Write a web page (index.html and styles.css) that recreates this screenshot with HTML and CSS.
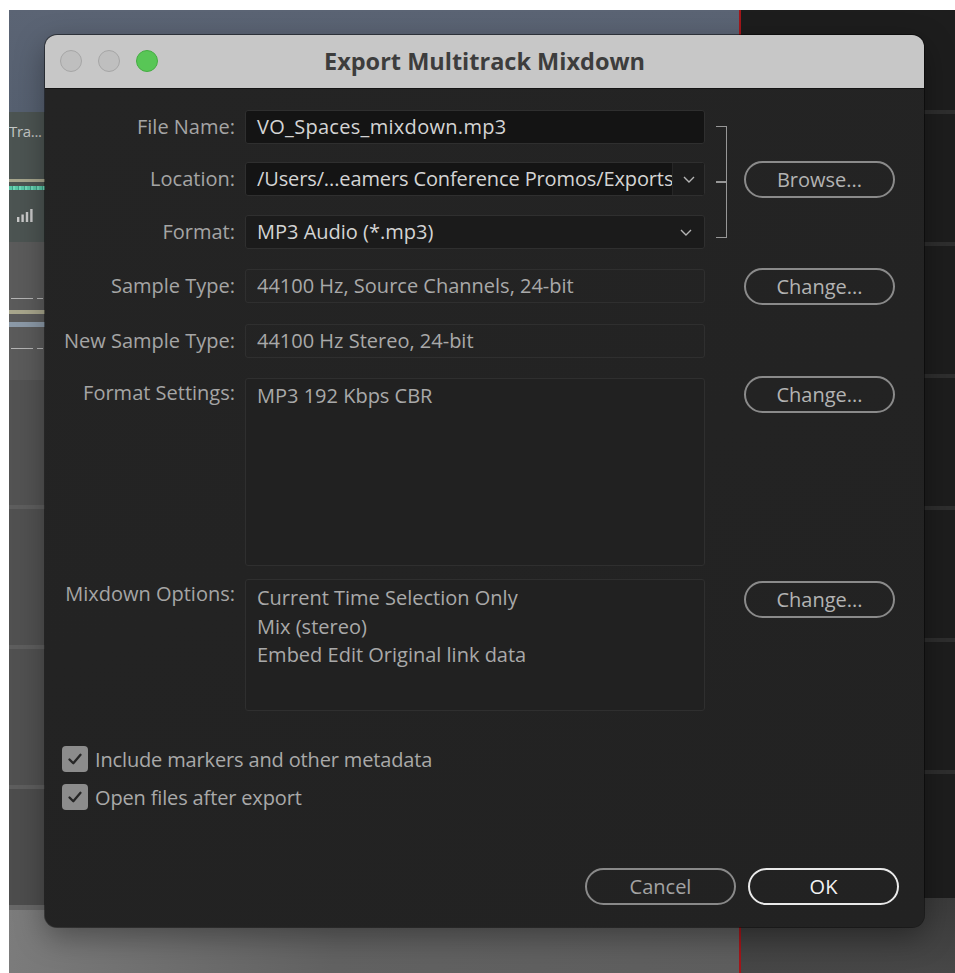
FILE: index.html
```html
<!DOCTYPE html>
<html lang="en">
<head>
<meta charset="utf-8">
<title>Export Multitrack Mixdown</title>
<link rel="stylesheet" href="styles.css">
</head>
<body>
<div class="desk">
  <div class="app">
    <div class="tracks">
      <div class="lane lane-head"></div>
      <div class="lane lane-audio">
        <span class="lane-name">Tra...</span>
        <span class="lane-vol"></span>
        <span class="lane-wave"></span>
        <svg class="lane-meter" width="16" height="13" viewBox="0 0 16 13">
          <rect x="0" y="8" width="2.4" height="5" fill="#c9c9c9"/>
          <rect x="4.4" y="5.5" width="2.4" height="7.5" fill="#c9c9c9"/>
          <rect x="8.8" y="3" width="2.4" height="10" fill="#c9c9c9"/>
          <rect x="13.2" y="0" width="2.4" height="13" fill="#c9c9c9"/>
        </svg>
      </div>
      <div class="lane lane-bus">
        <span class="bus-line"></span>
        <span class="bus-gold"></span>
        <span class="bus-blue"></span>
        <span class="bus-line bus-line-low"></span>
      </div>
      <div class="lane lane-a"></div>
      <div class="lane lane-b"></div>
      <div class="lane lane-b"></div>
      <div class="lane lane-c"></div>
      <div class="lane lane-edge"></div>
      <div class="lane lane-floor"></div>
    </div>
    <div class="playhead"></div>
    <div class="panels">
      <div class="panel panel-first"></div>
      <div class="panel"></div>
      <div class="panel"></div>
      <div class="panel"></div>
      <div class="panel"></div>
      <div class="panel"></div>
      <div class="panel panel-last"></div>
      <div class="panel-floor"></div>
    </div>
  </div>

  <div class="dialog">
    <div class="titlebar">
      <div class="lights">
        <span class="light"></span>
        <span class="light"></span>
        <span class="light light-green"></span>
      </div>
      <div class="title">Export Multitrack Mixdown</div>
    </div>

    <div class="dialog-body">
      <div class="form">
        <label class="lbl r1">File Name:</label>
        <div class="field field-input r1">VO_Spaces_mixdown.mp3</div>

        <label class="lbl r2">Location:</label>
        <div class="field field-combo r2">
          <span class="combo-text">/Users/...eamers Conference Promos/Exports</span>
          <span class="combo-arrow">
            <svg width="12" height="7" viewBox="0 0 12 7"><path d="M1 1l5 5 5-5" fill="none" stroke="#b5b5b5" stroke-width="1.4"/></svg>
          </span>
        </div>
        <button class="pill r2 pill-up">Browse...</button>

        <label class="lbl r3">Format:</label>
        <div class="field field-select r3">
          <span class="select-text">MP3 Audio (*.mp3)</span>
          <svg class="select-arrow" width="12" height="7" viewBox="0 0 12 7"><path d="M1 1l5 5 5-5" fill="none" stroke="#b5b5b5" stroke-width="1.4"/></svg>
        </div>

        <div class="bracket"><span class="bracket-mid"></span></div>

        <label class="lbl r4">Sample Type:</label>
        <div class="field field-static r4">44100 Hz, Source Channels, 24-bit</div>
        <button class="pill r4 pill-up">Change...</button>

        <label class="lbl r5">New Sample Type:</label>
        <div class="field field-static r5">44100 Hz Stereo, 24-bit</div>

        <label class="lbl lbl-area r6">Format Settings:</label>
        <div class="field field-area area-tall r6">MP3 192 Kbps CBR</div>
        <button class="pill r6 pill-up2">Change...</button>

        <label class="lbl lbl-area r7">Mixdown Options:</label>
        <div class="field field-area area-mix r7">
          <div>Current Time Selection Only</div>
          <div>Mix (stereo)</div>
          <div>Embed Edit Original link data</div>
        </div>
        <button class="pill r7 pill-down">Change...</button>
      </div>

      <div class="checks">
        <div class="check">
          <span class="box"><svg width="16" height="14" viewBox="0 0 16 14"><path d="M2.5 7.5l3.8 3.8L13.5 2.8" fill="none" stroke="#262626" stroke-width="2.3" stroke-linecap="round" stroke-linejoin="round"/></svg></span>
          <span class="check-text">Include markers and other metadata</span>
        </div>
        <div class="check">
          <span class="box"><svg width="16" height="14" viewBox="0 0 16 14"><path d="M2.5 7.5l3.8 3.8L13.5 2.8" fill="none" stroke="#262626" stroke-width="2.3" stroke-linecap="round" stroke-linejoin="round"/></svg></span>
          <span class="check-text">Open files after export</span>
        </div>
      </div>

      <div class="actions">
        <button class="pill pill-cancel">Cancel</button>
        <button class="pill pill-ok">OK</button>
      </div>
    </div>
  </div>
</div>
</body>
</html>
```

FILE: styles.css
```css
* { box-sizing: border-box; }

html, body {
  margin: 0;
  padding: 0;
  background: #ffffff;
}

body {
  font-family: "Open Sans", "Noto Sans", sans-serif;
  width: 955px;
  height: 973px;
  overflow: hidden;
}

.desk {
  position: relative;
  width: 955px;
  height: 973px;
  padding: 10px 0 0 9px;
}

/* ---------- host application behind the dialog ---------- */
.app {
  display: flex;
  height: 963px;
}

.tracks {
  width: 730px;
  display: flex;
  flex-direction: column;
}

.lane { position: relative; flex: none; }

.lane-head {
  height: 102px;
  background: linear-gradient(180deg, #5b6474 0%, #566070 100%);
}

.lane-audio {
  height: 130px;
  background: #4c5452;
}

.lane-name {
  position: absolute;
  left: 0;
  top: 9px;
  font-size: 15px;
  color: #c4c7c6;
  letter-spacing: -0.3px;
}

.lane-vol {
  position: absolute;
  left: 0; right: 0;
  top: 67px;
  height: 3px;
  background: #a7a68d;
}

.lane-wave {
  position: absolute;
  left: 0; right: 0;
  top: 74px;
  height: 4px;
  background: repeating-linear-gradient(90deg, #58c7a6 0 3px, #3f9d86 3px 4px, #6fd8b8 4px 6px);
}

.lane-meter {
  position: absolute;
  left: 8px;
  top: 97px;
}

.lane-bus {
  height: 138px;
  background: #5b5b5b;
}

.bus-line {
  position: absolute;
  left: 2px; right: 0;
  top: 56px;
  height: 1px;
  background: linear-gradient(90deg, #b5b5b5 0 22px, transparent 22px 26px, #b5b5b5 26px 32px, transparent 32px);
}
.bus-line-low { top: 106px; }

.bus-gold {
  position: absolute;
  left: 0; right: 0;
  top: 68px;
  height: 4px;
  background: #a9a78d;
}

.bus-blue {
  position: absolute;
  left: 0; right: 0;
  top: 80px;
  height: 5px;
  background: #8c9aa8;
}

.lane-a { height: 125px; background: #535353; }
.lane-b { height: 140px; background: #515151; border-top: 4px solid #5e5e5e; }
.lane-c { height: 120px; background: #4d4d4d; border-top: 4px solid #5e5e5e; }
.lane-edge { height: 5px; background: #686868; }
.lane-floor {
  flex: 1;
  background: linear-gradient(100deg, #7c7c7c 0%, #626262 45%, #5e5e5e 100%);
}

.playhead {
  width: 2px;
  flex: none;
  background: #a3161a;
}

.panels {
  flex: 1;
  display: flex;
  flex-direction: column;
}

.panel {
  flex: none;
  height: 132px;
  background: #1d1d1d;
  border-top: 4px solid #2e2e2e;
}
.panel-first { height: 100px; border-top: 0; }
.panel-last { height: 128px; }

.panel-floor {
  flex: 1;
  background: linear-gradient(180deg, #3a3a3a 0%, #474747 100%);
}

/* ---------- dialog window ---------- */
.dialog {
  position: absolute;
  left: 45px;
  top: 35px;
  width: 879px;
  height: 892px;
  border-radius: 12px;
  background: #232323;
  box-shadow: 0 0 0 1px rgba(0, 0, 0, 0.45), 0 10px 30px rgba(0, 0, 0, 0.35);
  display: flex;
  flex-direction: column;
  overflow: hidden;
}

.titlebar {
  position: relative;
  flex: none;
  height: 54px;
  background: #c7c7c7;
  border-bottom: 1px solid #141414;
  display: flex;
  align-items: center;
  justify-content: center;
}

.lights {
  position: absolute;
  left: 15px;
  top: 15px;
  display: flex;
  gap: 16px;
}

.light {
  width: 22px;
  height: 22px;
  border-radius: 50%;
  background: #bfbfbf;
  border: 1px solid #a6a6a6;
}

.light-green {
  background: #58c656;
  border-color: #45ad43;
}

.title {
  font-size: 23.5px;
  font-weight: 700;
  color: #3d3d3d;
  margin-top: -1px;
}

.dialog-body {
  flex: 1;
  display: flex;
  flex-direction: column;
  padding: 21px 0 22px 0;
  background: linear-gradient(160deg, #242424 0%, #222222 100%);
}

.form {
  display: grid;
  grid-template-columns: 200px 460px 39px 151px;
  grid-template-rows: 52px 53px 54px 55px 54px 201px 132px;
  color: #a6a6a6;
}

.r1 { grid-row: 1; }
.r2 { grid-row: 2; }
.r3 { grid-row: 3; }
.r4 { grid-row: 4; }
.r5 { grid-row: 5; }
.r6 { grid-row: 6; }
.r7 { grid-row: 7; }

.lbl {
  grid-column: 1;
  align-self: start;
  padding-right: 10px;
  text-align: right;
  font-size: 20px;
  line-height: 34px;
  color: #a5a5a5;
  white-space: nowrap;
}

.lbl-area { margin-top: -2px; }

.field {
  grid-column: 2;
  align-self: start;
  height: 34px;
  border: 1px solid #2f2f2f;
  border-radius: 3px;
  font-size: 20px;
  line-height: 32px;
  white-space: nowrap;
  overflow: hidden;
}

.field-input {
  background: #141414;
  color: #d4d4d4;
  padding-left: 11px;
  letter-spacing: 0.3px;
}

.field-combo {
  display: flex;
  background: #141414;
  color: #d4d4d4;
}

.combo-text {
  width: 426px;
  flex: none;
  padding-left: 11px;
  letter-spacing: -0.12px;
  overflow: hidden;
}

.combo-arrow {
  flex: 1;
  display: flex;
  align-items: center;
  justify-content: center;
  background: #1c1c1c;
  border-left: 1px solid #262626;
}

.field-select {
  display: flex;
  align-items: center;
  justify-content: space-between;
  background: #1b1b1b;
  color: #d4d4d4;
  padding: 0 12px 0 11px;
}

.field-static {
  background: transparent;
  color: #a9a9a9;
  padding-left: 11px;
}

.field-area {
  background: #212121;
  color: #a9a9a9;
  padding: 3px 11px;
  line-height: 28.5px;
  white-space: normal;
}

.area-tall { height: 188px; }
.area-mix { height: 132px; padding-top: 4px; }

.bracket {
  grid-column: 3;
  grid-row: 1 / 4;
  align-self: start;
  margin: 16px 0 0 11px;
  width: 11px;
  height: 112px;
  border: 1.5px solid #979797;
  border-left: 0;
  position: relative;
}

.bracket-mid {
  position: absolute;
  left: 0;
  right: 0;
  top: 54px;
  height: 1.5px;
  background: #979797;
}

.pill {
  font-family: inherit;
  height: 37px;
  border-radius: 19px;
  border: 2px solid #8a8a8a;
  background: transparent;
  color: #b3b3b3;
  font-size: 20px;
  line-height: 33px;
  padding: 0;
  text-align: center;
}

.form .pill {
  grid-column: 4;
  align-self: start;
  width: 151px;
}

.pill-up { margin-top: -1px; }
.pill-up2 { margin-top: -2px; }
.pill-down { margin-top: 2px; }

.checks {
  margin: 35px 0 0 17px;
  display: flex;
  flex-direction: column;
  gap: 12px;
}

.check {
  display: flex;
  align-items: center;
  gap: 7px;
  height: 26px;
}

.box {
  width: 26px;
  height: 26px;
  border-radius: 4px;
  background: #8c8c8c;
  display: flex;
  align-items: center;
  justify-content: center;
}

.check-text {
  font-size: 20px;
  letter-spacing: -0.15px;
  color: #a9a9a9;
}

.actions {
  margin-top: auto;
  display: flex;
  justify-content: flex-end;
  gap: 12px;
  padding-right: 25px;
}

.actions .pill { width: 151px; }

.pill-cancel {
  color: #a3a3a3;
  border-color: #898989;
}

.pill-ok {
  border: 2.5px solid #e9e9e9;
  color: #f2f2f2;
  font-size: 20px;
  line-height: 32px;
}
```
